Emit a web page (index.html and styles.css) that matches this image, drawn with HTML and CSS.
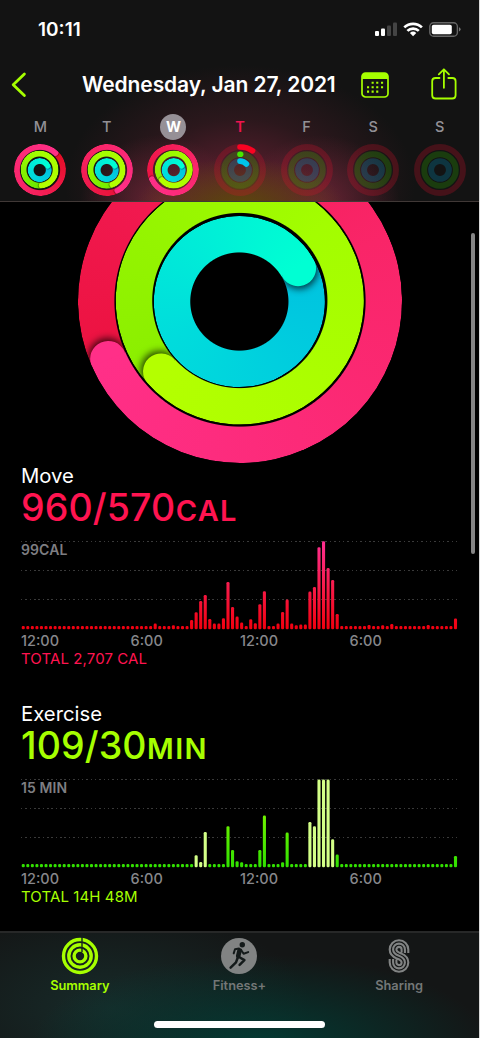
FILE: index.html
```html
<!DOCTYPE html>
<html lang="en">
<head>
    <meta charset="UTF-8">
    <meta name="viewport" content="width=device-width, initial-scale=1.0">
    <title>Activity</title>
    <link rel="stylesheet" href="styles.css">
</head>
<body>
    <div class="phone">
        <header class="header">
            <!-- Status bar -->
            <div class="status">
                <span class="time">10:11</span>
                <svg class="status-icons" width="86" height="16" viewBox="0 0 86 16">
                    <rect x="0" y="9" width="4" height="5" rx="1" fill="#fff"/>
                    <rect x="6" y="6.5" width="4" height="7.5" rx="1" fill="#fff"/>
                    <rect x="12" y="3.5" width="4" height="10.5" rx="1" fill="#444"/>
                    <rect x="18" y="0.5" width="4" height="13.5" rx="1" fill="#444"/>
                    <g fill="none" stroke="#fff" stroke-width="2.7">
                        <path d="M29.3 5.4a12.6 12.6 0 0 1 17.6 0"/>
                        <path d="M32.4 8.9a8.2 8.2 0 0 1 11.4 0"/>
                    </g>
                    <path d="M34.9 11.1a4.7 4.7 0 0 1 6.4 0l-3.2 3.2z" fill="#fff"/>
                    <rect x="54.8" y="0.8" width="27.6" height="13.4" rx="3.8" fill="none" stroke="#666" stroke-width="1.4"/>
                    <rect x="56.8" y="2.7" width="20" height="9.6" rx="1.8" fill="#fff"/>
                    <path d="M84 5.2v4.2q1.6-.6 1.6-2.1t-1.6-2.1z" fill="#777"/>
                </svg>
            </div>

            <div class="nav">
                <svg class="back" width="16" height="26" viewBox="0 0 16 26">
                    <path d="M13.4 2L2.2 12.8L13.4 23.6" fill="none" stroke="#a6ff00" stroke-width="2.8" stroke-linecap="round" stroke-linejoin="round"/>
                </svg>
                <h1 class="title">Wednesday, Jan 27, 2021</h1>
                <svg class="calendar" width="28" height="26" viewBox="0 0 28 26">
                    <rect x="1" y="1" width="26" height="24" rx="3.6" fill="none" stroke="#a6ff00" stroke-width="1.7"/>
                    <path d="M1 7V4.5Q1 1 4.5 1h19Q27 1 27 4.5V7z" fill="#a6ff00"/>
                    <g stroke="#a6ff00" stroke-width="2.1">
                        <path d="M10.6 10.8h2.1M15.2 10.8h2.1M20 10.8h2.1"/>
                        <path d="M6 15.2h2.1M10.6 15.2h2.1M15.2 15.2h2.1M20 15.2h2.1"/>
                        <path d="M6 19.6h2.1M10.6 19.6h2.1M15.2 19.6h2.1"/>
                    </g>
                </svg>
                <svg class="share" width="26" height="32" viewBox="0 0 26 32">
                    <g fill="none" stroke="#a6ff00" stroke-width="1.8" stroke-linecap="round" stroke-linejoin="round">
                        <path d="M8.5 10H4.6Q1.2 10 1.2 13.2V27.2Q1.2 30.5 4.6 30.5H21.2Q24.6 30.5 24.6 27.2V13.2Q24.6 10 21.2 10H17.3"/>
                        <path d="M12.9 19.8V1.5M7.8 6.3L12.9 1.3L18 6.3"/>
                    </g>
                </svg>
            </div>

            <div class="week" id="week"></div>
        </header>

        <main class="content">
            <div class="rings rings-large">
                <div class="ring move"></div>
                <div class="ring exercise"></div>
                <div class="ring stand"></div>
                <svg class="marks" width="324" height="324" viewBox="-162 -162 324 324">
                    <g fill="none" stroke="#000" stroke-width="3" stroke-linecap="round" stroke-linejoin="round">
                        <path d="M0-57.5V-75.5M-10.6-66.6L0-75.8L10.6-66.6"/>
                        <path d="M-3-93.5L6-105L-3-116M4-93.5L13-105L4-116"/>
                    </g>
                </svg>
            </div>

            <section class="metric metric-move">
                <h2 class="name">Move</h2>
                <p class="value">960/570<span class="unit">CAL</span></p>
                <div class="chart">
                    <span class="max">99CAL</span>
                    <svg class="bars" id="moveBars" width="437" height="89">
                        <defs>
                            <linearGradient id="moveFill" gradientUnits="userSpaceOnUse" x1="0" y1="88" x2="0" y2="0">
                                <stop offset="0" stop-color="#f2000f"/>
                                <stop offset="0.5" stop-color="#f71c4c"/>
                                <stop offset="1" stop-color="#ff2f92"/>
                            </linearGradient>
                        </defs>
                    </svg>
                </div>
                <div class="hours"><span>12:00</span><span>6:00</span><span>12:00</span><span>6:00</span></div>
                <p class="total">TOTAL 2,707 CAL</p>
            </section>

            <section class="metric metric-exercise">
                <h2 class="name">Exercise</h2>
                <p class="value">109/30<span class="unit">MIN</span></p>
                <div class="chart">
                    <span class="max">15 MIN</span>
                    <svg class="bars" id="exerciseBars" width="437" height="89">
                        <defs>
                            <linearGradient id="exerciseFill" gradientUnits="userSpaceOnUse" x1="0" y1="88" x2="0" y2="0">
                                <stop offset="0" stop-color="#30e000"/>
                                <stop offset="1" stop-color="#9dff00"/>
                            </linearGradient>
                        </defs>
                    </svg>
                </div>
                <div class="hours"><span>12:00</span><span>6:00</span><span>12:00</span><span>6:00</span></div>
                <p class="total">TOTAL 14H 48M</p>
            </section>
            <div class="scrollbar"></div>
        </main>

        <nav class="tabs">
            <div class="tab active">
                <svg width="38" height="38" viewBox="-19 -19 38 38">
                    <g fill="none" stroke="#a6ff00" stroke-width="3.4">
                        <circle r="16.5"/>
                        <circle r="11.2"/>
                        <circle r="5.9"/>
                    </g>
                    <path d="M2-19V-4" stroke="#14211f" stroke-width="1.4"/>
                </svg>
                <span>Summary</span>
            </div>
            <div class="tab">
                <svg width="38" height="38" viewBox="-19 -19 38 38">
                    <circle r="18" fill="#818383"/>
                    <circle cx="3.3" cy="-11.2" r="2.7" fill="#141a1a"/>
                    <g fill="none" stroke="#141a1a" stroke-linecap="round" stroke-linejoin="round">
                        <path d="M.6-5.6L-.8 0" stroke-width="4.6"/>
                        <path d="M0-7.4L-4-6.8L-5.3-2.6M1.8-6.5L4.6-2.2L9.2-3.9" stroke-width="2"/>
                        <path d="M0 1L5.4 4.2L.6 8.9M-1.2 1.5L-3 6.4L-8.4 11.6" stroke-width="2.5"/>
                    </g>
                </svg>
                <span>Fitness+</span>
            </div>
            <div class="tab">
                <svg width="38" height="38" viewBox="-19 -19 38 38">
                    <g fill="none" stroke="#818383" stroke-width="2.1">
                        <path d="M9.3-3V-6.5A9.3 9.3 0 0 0-9.3-6.5C-9.3-1-6 1-2 2.6Q2.6 4.3 2.6 6.5A2.6 2.6 0 0 1-2.6 6.5V3.5"/>
                        <path d="M5.9-3V-6.5A5.9 5.9 0 0 0-5.9-6.5C-5.9-3-4-1.7 0-.2Q5.9 2 5.9 6.5A5.9 5.9 0 0 1-5.9 6.5V3"/>
                        <path d="M2.6-3.5V-6.5A2.6 2.6 0 0 0-2.6-6.5Q-2.6-4.3 2-2.6C6-1 9.3 1 9.3 6.5A9.3 9.3 0 0 1-9.3 6.5V3"/>
                    </g>
                </svg>
                <span>Sharing</span>
            </div>
            <div class="home"></div>
        </nav>
    </div>

    <script src="script.js"></script>
</body>
</html>
```

FILE: styles.css
```css
* {
    box-sizing: border-box;
}

body {
    margin: 0;
    background: #d8d8d8;
    font-family: Inter, "Liberation Sans", sans-serif;
    color: #fff;
}

h1, h2, p {
    margin: 0;
}

svg {
    display: block;
    flex: none;
}

.phone {
    width: 479px;
    height: 1038px;
    background: #000;
    display: flex;
    flex-direction: column;
    overflow: hidden;
}

/* Header */
.header {
    flex: none;
    height: 202px;
    border-bottom: 1px solid #403836;
    background:
        radial-gradient(ellipse 105px 50px at 240px 208px, rgba(92, 76, 8, 0.95), rgba(88, 72, 8, 0)),
        radial-gradient(ellipse 80px 70px at 160px 205px, rgba(140, 42, 66, 0.6), rgba(120, 36, 58, 0)),
        radial-gradient(ellipse 80px 70px at 320px 205px, rgba(140, 42, 66, 0.6), rgba(120, 36, 58, 0)),
        radial-gradient(ellipse 175px 120px at 240px 185px, rgba(112, 34, 54, 0.85), rgba(80, 30, 42, 0.4) 55%, rgba(50, 20, 28, 0)),
        #131313;
}

.status {
    height: 58px;
    padding: 1px 18px 0 38px;
    display: flex;
    justify-content: space-between;
    align-items: center;
}

.time {
    font-size: 19px;
    font-weight: 600;
}

.nav {
    height: 54px;
    padding: 0 22px 0 11px;
    display: flex;
    align-items: center;
}

.back {
    margin-bottom: 1px;
}

.title {
    flex: none;
    margin: 0 0 2px 55px;
    width: 279px;
    font-size: 21px;
    letter-spacing: -0.1px;
    font-weight: 600;
    white-space: nowrap;
}

.calendar {
    margin-bottom: 1px;
}

.share {
    margin: 0 0 2px 42px;
}

.week {
    padding: 0 6px 0 7px;
    display: grid;
    grid-template-columns: repeat(7, 1fr);
}

.day {
    display: flex;
    flex-direction: column;
    align-items: center;
    gap: 4px;
}

.letter {
    width: 26px;
    height: 26px;
    margin-top: 1.5px;
    line-height: 26px;
    text-align: center;
    font-size: 14.5px;
    font-weight: 500;
    color: #929096;
    border-radius: 50%;
}

.letter.selected {
    background: #969096;
    color: #fff;
    font-weight: 700;
}

.letter.today {
    color: #f0144f;
    font-weight: 600;
}

/* Activity rings, the end of each one is turned to --end */
.rings {
    --size: 52px;
    --thick: 5.9px;
    width: var(--size);
    height: var(--size);
    display: grid;
    place-items: center;
}

.rings > * {
    grid-area: 1 / 1;
}

.ring {
    width: var(--d);
    height: var(--d);
    border-radius: 50%;
    display: grid;
    justify-items: center;
    align-items: start;
    transform: rotate(var(--end));
    background: conic-gradient(var(--from), var(--mid), var(--to));
    -webkit-mask: radial-gradient(closest-side, transparent calc(100% - var(--thick) - 0.5px), #000 calc(100% - var(--thick) + 0.5px));
    mask: radial-gradient(closest-side, transparent calc(100% - var(--thick) - 0.5px), #000 calc(100% - var(--thick) + 0.5px));
}

/* Rounded end: only the leading half of the circle and its shadow show */
.ring::after {
    content: "";
    width: var(--thick);
    height: var(--thick);
    border-radius: 50%;
    background: var(--to);
    box-shadow: 1px 0 1px rgba(0, 0, 0, 0.35);
    clip-path: inset(-20px -20px -20px 48%);
}

.ring.move {
    --d: 52px;
    --end: 246.3deg;
    --from: #ec1240;
    --mid: #f92568;
    --to: #ff2f88;
}

.ring.exercise {
    --d: 37.6px;
    --end: 228deg;
    --from: #8aee00;
    --mid: #a3fd00;
    --to: #b4ff00;
}

.ring.stand {
    --d: 23.6px;
    --end: 60deg;
    --from: #00c2e0;
    --mid: #00dcdc;
    --to: #00ffd3;
}

.rings-large {
    --size: 324px;
    --thick: 36.4px;
    margin: -63px auto 0;
}

.rings-large .ring.move {
    --d: 324px;
}

.rings-large .ring.exercise {
    --d: 247.6px;
}

.rings-large .ring.stand {
    --d: 170.8px;
}

.rings-large .ring::after {
    box-shadow: 2px 0 7px 1px rgba(0, 0, 0, 0.7);
}

/* Content */
.content {
    flex: 1;
    min-height: 0;
    position: relative;
    overflow: hidden;
}

.metric {
    margin: 1px 21px 34px;
    height: 204px;
}

.name {
    font-size: 20.3px;
    line-height: 24px;
    font-weight: 400;
}

.value {
    font-size: 37.5px;
    line-height: 40px;
    height: 40px;
    font-weight: 500;
    letter-spacing: 0.1px;
    white-space: nowrap;
}

.unit {
    margin-left: 0.5px;
    font-size: 29px;
    font-weight: 600;
    letter-spacing: 1.3px;
}

.chart {
    --dots: repeating-linear-gradient(to right, #3a3a3a 0 1.5px, transparent 1.5px 4.35px);
    margin-top: 13px;
    height: 89px;
    display: grid;
    background:
        var(--dots) 0 0 / 436px 1px no-repeat,
        var(--dots) 0 29px / 436px 1px no-repeat,
        var(--dots) 0 58px / 436px 1px no-repeat;
}

.chart > * {
    grid-area: 1 / 1;
}

.max {
    margin-top: 1px;
    font-size: 14px;
    line-height: 16px;
    font-weight: 600;
    letter-spacing: 0.1px;
    color: #7e7e82;
}

.metric-move .bar {
    fill: url(#moveFill);
}

.metric-exercise .bar {
    fill: url(#exerciseFill);
}

.metric-exercise .bar.workout {
    fill: #d3ff87;
}

.hours {
    margin-top: 3px;
    display: grid;
    grid-template-columns: repeat(4, 109.5px);
    font-size: 14.5px;
    line-height: 16px;
    font-weight: 500;
    color: #87878b;
}

.total {
    margin-top: 1px;
    font-size: 15px;
    line-height: 18px;
    font-weight: 400;
    letter-spacing: 0.1px;
}

.metric-move .value,
.metric-move .total {
    color: #ff1450;
}

.metric-exercise .value,
.metric-exercise .total {
    color: #a6ff00;
}

.scrollbar {
    position: absolute;
    top: 31px;
    right: 4px;
    width: 4px;
    height: 321px;
    border-radius: 2px;
    background: #858585;
}

/* Tab bar */
.tabs {
    flex: none;
    height: 107px;
    border-top: 2px solid #272828;
    padding-top: 4px;
    display: grid;
    grid-template-columns: repeat(3, 1fr);
    align-content: start;
    background:
        radial-gradient(ellipse 230px 90px at 260px 112px, #033a33, rgba(3, 58, 51, 0)),
        radial-gradient(ellipse 200px 100px at 110px 75px, rgba(24, 50, 48, 0.75), rgba(20, 40, 40, 0)),
        #141616;
}

.tab {
    display: flex;
    flex-direction: column;
    align-items: center;
    gap: 2px;
    font-size: 12.8px;
    line-height: 17px;
    font-weight: 600;
    color: #747777;
}

.tab.active {
    color: #a6ff00;
}

.home {
    grid-column: 1 / -1;
    justify-self: center;
    margin-top: 27px;
    width: 171px;
    height: 7px;
    border-radius: 4px;
    background: #fff;
}
```

FILE: script.js
```js
// Calories and exercise per quarter of an hour, as bar heights in px
const BARS = 96;
const IDLE = 3.2;
const STEP = 4.55;
const BASE = 88.3;

const move = {
    29: 5.7, 33: 4, 37: 9.3, 38: 17, 39: 28.3, 40: 34.3, 41: 10.3, 42: 5.7, 43: 5.7,
    44: 11, 45: 47.3, 46: 22.3, 47: 12.7, 48: 6.7, 50: 10, 51: 6, 52: 25, 53: 38,
    56: 5.7, 57: 17.3, 58: 29.7, 59: 5.7, 60: 4, 61: 4.7, 62: 4.7, 63: 37.7, 64: 42.3,
    65: 82, 66: 88, 67: 61.3, 68: 49.3, 69: 15.3, 76: 4.3, 79: 4, 81: 5.3, 89: 4.3, 95: 10.7
};

const exercise = {
    38: 12, 39: 5.3, 40: 35.3, 45: 41, 46: 17.3, 47: 6, 48: 5, 52: 17.3, 53: 51.7,
    57: 5, 58: 34.7, 63: 45.3, 64: 41, 65: 87.7, 66: 87.7, 67: 87.7, 68: 28, 69: 12.7, 95: 11.3
};

// Quarters that belong to a recorded workout
const workout = [38, 39, 40, 63, 64, 65, 66, 67, 68];

function drawBars(id, values, marked) {
    const chart = document.getElementById(id);
    for (let i = 0; i < BARS; i++) {
        const height = values[i] || IDLE;
        const bar = document.createElementNS("http://www.w3.org/2000/svg", "rect");
        bar.setAttribute("class", marked.includes(i) ? "bar workout" : "bar");
        bar.setAttribute("x", (0.7 + i * STEP).toFixed(2));
        bar.setAttribute("y", (BASE - height).toFixed(2));
        bar.setAttribute("width", 3.1);
        bar.setAttribute("height", height);
        bar.setAttribute("rx", 1.3);
        chart.appendChild(bar);
    }
}

// Days of the week, "ends" are the ring angles in degrees
const days = [
    { letter: "M", ends: [42, 172, 60], from: ["#e30c22", "#66e800", "#00bfe0"] },
    { letter: "T", ends: [153, 158, 60], from: ["#e81238", "#70ea00", "#00bfe0"] },
    { letter: "W", ends: [246, 228, 60], type: "selected" },
    { letter: "T", type: "today" },
    { letter: "F" },
    { letter: "S" },
    { letter: "S" }
];

const names = ["move", "exercise", "stand"];

function fullRings(day) {
    return names.map((name, i) => {
        const from = day.from ? `;--from:${day.from[i]}` : "";
        return `<div class="ring ${name}" style="--end:${day.ends[i]}deg${from}"></div>`;
    }).join("");
}

function emptyRings(day) {
    const today = `
        <g fill="none" stroke-width="5.6" stroke-linecap="round">
            <path d="M0-23A23 23 0 0 1 12.6-19.2" stroke="#fa0322"/>
            <path d="M0-15.8L.6-15.8" stroke="#48e800"/>
            <path d="M0-8.9A8.9 8.9 0 0 1 6.4-6" stroke="#00c4ea"/>
        </g>`;
    return `<svg width="52" height="52" viewBox="-26 -26 52 52">
        <g fill="none" stroke-width="5.9">
            <circle r="23" stroke="#e4102e" stroke-opacity=".24"/>
            <circle r="15.8" stroke="#35c800" stroke-opacity=".23"/>
            <circle r="8.9" stroke="#00a8d8" stroke-opacity=".23"/>
        </g>${day.type === "today" ? today : ""}
    </svg>`;
}

document.getElementById("week").innerHTML = days.map(day => `
    <div class="day">
        <span class="letter ${day.type || ""}">${day.letter}</span>
        <div class="rings">${day.ends ? fullRings(day) : emptyRings(day)}</div>
    </div>`).join("");

drawBars("moveBars", move, []);
drawBars("exerciseBars", exercise, workout);
```
